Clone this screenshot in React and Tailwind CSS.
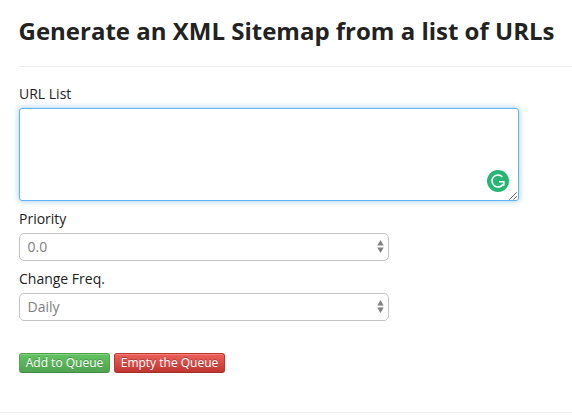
import { useState } from "react";

const PRIORITIES = ["0.0", "0.1", "0.2", "0.3", "0.4", "0.5", "0.6", "0.7", "0.8", "0.9", "1.0"];
const FREQUENCIES = ["Daily", "Weekly", "Monthly", "Yearly"];

const SelectField = ({ id, label, options }) => {
  const [value, setValue] = useState(options[0]);

  return (
    <div>
      <label htmlFor={id} className="block h-5 mb-1 text-sm leading-5 text-[#222]">
        {label}
      </label>
      <div className="relative w-[370px] h-7">
        <select
          id={id}
          value={value}
          onChange={(e) => setValue(e.target.value)}
          className="block w-full h-7 pl-[7.5px] appearance-none rounded-[5px] border border-[#c4c4c4] bg-white text-sm text-[#808080] outline-none"
        >
          {options.map((option) => (
            <option key={option}>{option}</option>
          ))}
        </select>
        <svg
          className="absolute right-[5px] top-[7px] pointer-events-none"
          width="7"
          height="13"
          viewBox="0 0 7 13"
          fill="#808080"
        >
          <path d="M3.5 0 6.7 5.5H.3z" />
          <path d="M.3 7.5h6.4L3.5 13z" />
        </svg>
      </div>
    </div>
  );
};

const App = () => {
  const [urls, setUrls] = useState("");

  return (
    <div className="h-[420px] overflow-hidden bg-white font-['Open_Sans',sans-serif] text-[#222]">
      <div className="ml-[19px] h-[67px] pt-[11px] border-b border-[#eee]">
        <h1 className="-ml-[0.5px] text-[24px] leading-10 font-bold whitespace-nowrap">
          Generate an XML Sitemap from a list of URLs
        </h1>
      </div>

      <form className="ml-[19px] pt-[17px]" onSubmit={(e) => e.preventDefault()}>
        <label htmlFor="urls" className="block h-5 mb-1 text-sm leading-5">
          URL List
        </label>
        <div className="relative w-[500px] h-[93px] mb-2">
          <textarea
            id="urls"
            value={urls}
            onChange={(e) => setUrls(e.target.value)}
            className="block w-full h-full resize-none rounded-[3px] border border-[#66b2ee] bg-white px-2 py-1 text-sm outline-none shadow-[0_0_6px_rgba(82,168,236,0.6)]"
          />
          {/* Grammar checker badge */}
          <svg className="absolute left-[468.4px] top-[62px]" width="22" height="22" viewBox="0 0 22 22" fill="none">
            <circle cx="11" cy="11" r="11" fill="#27b573" />
            <path d="M15.4 6.9A6 6 0 1 0 16.2 14" stroke="#fff" strokeWidth="1.6" />
            <path d="M12 11.8h4.8v4" stroke="#fff" strokeWidth="1.6" />
          </svg>
          {/* Resize grip */}
          <svg className="absolute right-[2px] bottom-[1px]" width="8" height="8" viewBox="0 0 8 8" stroke="#555" strokeWidth="0.9">
            <path d="M.3 7.7 7.7.3M4.3 7.7l3.4-3.4" />
          </svg>
        </div>

        <div className="flex flex-col gap-2">
          <SelectField id="priority" label="Priority" options={PRIORITIES} />
          <SelectField id="freq" label="Change Freq." options={FREQUENCIES} />
        </div>

        <div className="flex gap-1 mt-8">
          <button className="w-[91px] h-5 rounded-[3px] border border-[#51a351] border-b-[#448944] bg-linear-to-b from-[#62c462] to-[#51a351] text-xs leading-[18px] text-white whitespace-nowrap shadow-[inset_0_1px_0_rgba(255,255,255,0.2)] text-shadow-[0_-1px_0_rgba(0,0,0,0.25)]">
            Add to Queue
          </button>
          <button className="w-[111px] h-5 rounded-[3px] border border-[#bd362f] border-b-[#a52c27] bg-linear-to-b from-[#ee5f5b] to-[#bd362f] text-xs leading-[18px] text-white whitespace-nowrap shadow-[inset_0_1px_0_rgba(255,255,255,0.2)] text-shadow-[0_-1px_0_rgba(0,0,0,0.25)]">
            Empty the Queue
          </button>
        </div>
      </form>

      <div className="mt-[39px] border-t border-[#f2f2f2]" />
    </div>
  );
};

export default App;
